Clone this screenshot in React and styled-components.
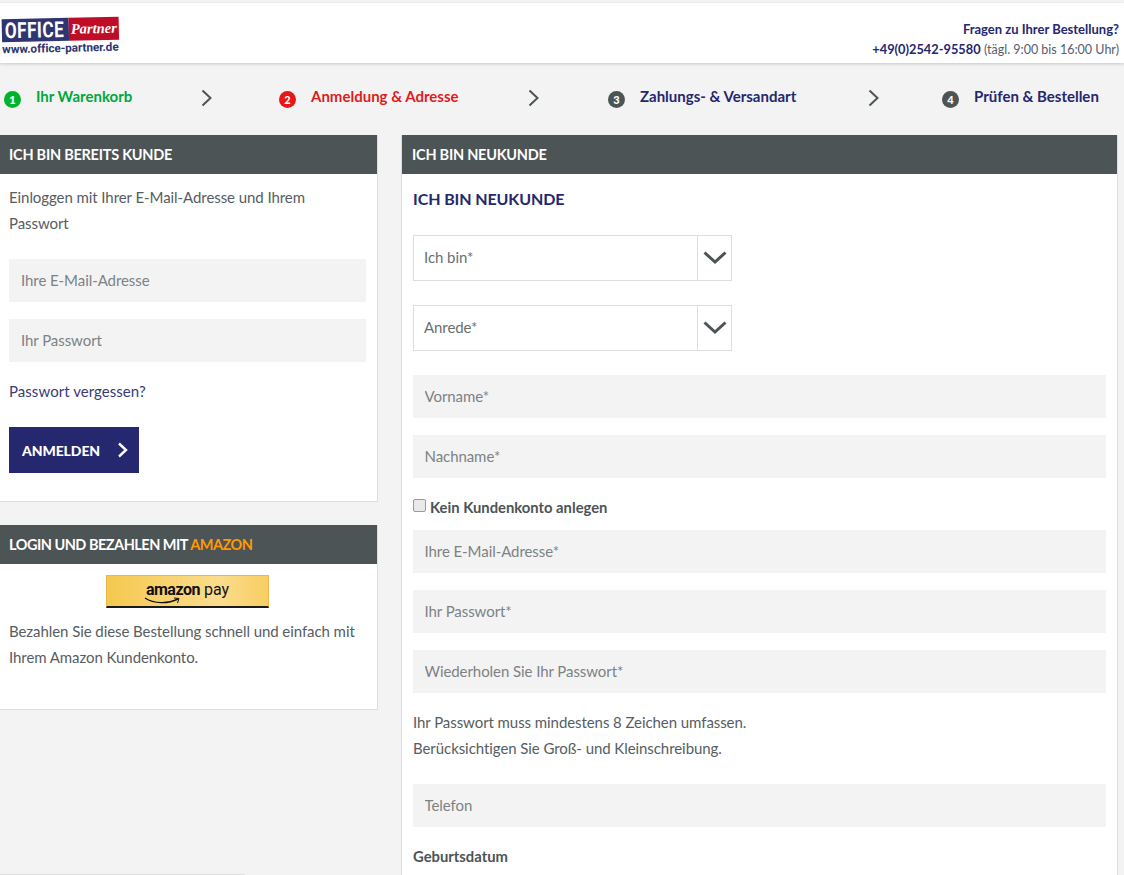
import React from 'react';
import styled, { createGlobalStyle } from 'styled-components';

const Global = createGlobalStyle`
  html, body { margin: 0; padding: 0; background: #f3f3f3; }
  body { height: 875px; overflow: hidden; font-family: "Lato", "Noto Sans", sans-serif; color: #4c5456; font-size: 15px; }
  * { box-sizing: border-box; }
`;
const Navy = '#25276f';
const Page = styled.div`height: 875px; overflow: hidden; padding-top: 3px;`;
const Header = styled.header`
  height: 60px; background: #fff; box-shadow: 0 1px 3px rgba(0,0,0,.18);
  display: flex; justify-content: space-between; align-items: flex-start; padding: 0 5px 0 2px;
`;
const Logo = styled.div`margin-top: 15px; width: 117px; transform: rotate(-1.3deg);`;
const LogoBar = styled.div`display: flex; height: 23px;`;
const LogoOffice = styled.div`
  width: 67px; background: #2f3570; color: #fff; font: 700 22px/24px "Liberation Sans Narrow", "Roboto", sans-serif;
  letter-spacing: .6px; padding-left: 3px; white-space: nowrap; overflow: hidden;
  span { display: inline-block; transform: scaleX(.78); transform-origin: left; }
`;
const LogoPartner = styled.div`
  flex: 1; background: #c00d27; color: #fff; font: italic 700 14.5px/23px "Liberation Serif", serif; text-align: center;
`;
const LogoUrl = styled.div`font: 700 11.7px/13px "Roboto", sans-serif; color: #2f3570; margin-top: 1px; letter-spacing: -.05px; white-space: nowrap;`;
const Contact = styled.div`text-align: right; margin-top: 16px; font-size: 13px; line-height: 20px; color: ${Navy};`;
const ContactStrong = styled.div`font-weight: 700;`;
const Phone = styled.strong`font-size: 12.8px;`;
const Hours = styled.span`color: #565d6e; font-size: 12.5px;`;
const Steps = styled.nav`
  height: 72px; display: grid; grid-template-columns: 197px 78px 249px 80px 260px 74px 1fr; padding: 23px 0 0 4px;
`;
const Step = styled.div`display: flex; align-items: flex-start; font-weight: 700; font-size: 15px; line-height: 20px; color: ${p => p.$color};`;
const Circle = styled.span`
  width: 17px; height: 17px; border-radius: 50%; background: ${p => p.$bg}; color: #fff; font-size: 11px; font-weight: 900;
  line-height: 17px; text-align: center; margin: 5px 15px 0 0; flex: none;
`;
const Chevron = styled.svg`width: 12px; height: 18px; margin-top: 3px; display: block;`;
const Columns = styled.main`display: grid; grid-template-columns: 378px 717px; column-gap: 23px;`;
const LeftCol = styled.div`display: flex; flex-direction: column;`;
const Panel = styled.section`
  background: #fff; border: 1px solid #ddd; border-top: 0; ${p => p.$noLeft ? 'border-left: 0;' : ''}
  & + & { margin-top: 23px; }
  height: ${p => p.$h ? p.$h + 'px' : 'auto'};
`;
const PanelHead = styled.h2`
  margin: 0; height: 39px; background: #4c5456; color: #fff; font-size: 14.5px; font-weight: 700; line-height: 39px; padding-left: ${p => p.$full ? 10 : 9}px; text-transform: uppercase;
  letter-spacing: ${p => p.$tight ? -.5 : -.25}px;
`;
const Orange = styled.span`color: #ff9900;`;
const LeftBody = styled.div`padding: 10px 11px 0 9px;`;
const Text = styled.p`margin: 0; font-size: 15px; line-height: 26px; color: #565d63; letter-spacing: -.07px;`;
const Field = styled.input`
  display: block; width: 100%; height: 43px; border: 0; background: #f3f3f3; padding: 0 12px 2px; margin-top: ${p => p.$mt ?? 17}px;
  font: 15px "Lato", sans-serif; color: #4c5456; outline: 0; letter-spacing: -.07px;
  &::placeholder { color: #7d8284; opacity: 1; }
`;
const WideField = styled(Field)`padding: 0 11.5px 2px;`;
const ForgotLink = styled.a`display: block; margin-top: 16px; font-size: 15px; line-height: 26px; color: #3a3a78; letter-spacing: .05px;`;
const Button = styled.button`
  display: flex; align-items: center; width: 130px; height: 46px; margin-top: 23px; border: 0; background: ${Navy}; color: #fff;
  font: 900 14px "Lato", sans-serif; padding: 0 0 0 13px; letter-spacing: -.1px;
  svg { margin-left: 17px; }
`;
const AmazonBody = styled.div`padding: 11px 11px 0 9px;`;
const PayButton = styled.div`
  width: 163px; height: 33px; margin: 0 auto 10px;
  background: linear-gradient(90deg, #f5c94f 0%, #fbdc8c 70%, #f8cd62 100%);
  border: 1px solid #e6bb4a; border-bottom: 2px solid #1a1a1a; position: relative;
  display: flex; align-items: center; justify-content: center; gap: 4px; padding-bottom: 2px;
  color: #111; font: 700 16px/1 "Roboto", sans-serif; letter-spacing: -.5px;
`;
const PayWord = styled.span`font-weight: 400; letter-spacing: 0;`;
const Smile = styled.svg`position: absolute; left: 37px; top: 21px; width: 40px; height: 8px;`;
const Rule = styled.div`width: 245px; margin-top: 164px; border-top: 1px solid #ddd;`;
const RightBody = styled.div`padding: 14px 11px 60px 11px;`;
const FormTitle = styled.h3`margin: 0 0 25px; font-size: 16px; line-height: 22px; font-weight: 700; color: ${Navy}; text-transform: uppercase; letter-spacing: -.1px;`;
const SelectBox = styled.div`
  display: flex; width: 319px; height: 46px; border: 1px solid #ddd; margin-bottom: 24px; align-items: stretch; background: #fff;
`;
const SelectText = styled.div`flex: 1; padding-left: 10px; line-height: 42px; font-size: 15px; color: #6a6f72; letter-spacing: -.07px;`;
const SelectArrow = styled.div`width: 34px; border-left: 1px solid #ddd; display: flex; align-items: center; justify-content: center;`;
const CheckRow = styled.label`display: flex; align-items: flex-start; margin-top: 17px; height: 26px; font-weight: 700; font-size: 14.8px; line-height: 24px; color: #4c5456;`;
const Check = styled.input`
  appearance: none; width: 13px; height: 13px; margin: 4px 4px 0 0; flex: none; background: #e9e9e9; border: 1px solid #9a9a9a; border-radius: 2px;
`;
const Note = styled.p`margin: 16px 0 0; font-size: 15px; line-height: 26px; color: #565d63; letter-spacing: -.07px;`;
const Label = styled.div`margin-top: 16px; font-weight: 700; font-size: 14.8px; line-height: 26px; color: #4c5456;`;

const Chev = ({ color = '#4c5456', w = 2 }) => (
  <Chevron viewBox="0 0 12 18" fill="none"><path d="M1.5 1.5 L9.5 9 L1.5 16.5" stroke={color} strokeWidth={w} /></Chevron>
);
const Down = () => (
  <svg width="24" height="14" viewBox="0 0 24 14" fill="none"><path d="M1.5 1.5 L12 11 L22.5 1.5" stroke="#4c5456" strokeWidth="3" /></svg>
);

export default function App() {
  return (
    <Page>
      <Global />
      <Header>
        <Logo>
          <LogoBar>
            <LogoOffice><span>OFFICE</span></LogoOffice>
            <LogoPartner>Partner</LogoPartner>
          </LogoBar>
          <LogoUrl>www.office-partner.de</LogoUrl>
        </Logo>
        <Contact>
          <ContactStrong>Fragen zu Ihrer Bestellung?</ContactStrong>
          <div><Phone>+49(0)2542-95580</Phone> <Hours>(tägl. 9:00 bis 16:00 Uhr)</Hours></div>
        </Contact>
      </Header>
      <Steps>
        <Step $color="#00a83c"><Circle $bg="#00b32d">1</Circle>Ihr Warenkorb</Step>
        <Chev />
        <Step $color="#e01b1b"><Circle $bg="#e81717">2</Circle>Anmeldung &amp; Adresse</Step>
        <Chev />
        <Step $color={Navy}><Circle $bg="#4c5456">3</Circle>Zahlungs- &amp; Versandart</Step>
        <Chev />
        <Step $color={Navy}><Circle $bg="#4c5456">4</Circle>Prüfen &amp; Bestellen</Step>
      </Steps>
      <Columns>
        <LeftCol>
          <Panel $noLeft $h={367}>
            <PanelHead>Ich bin bereits Kunde</PanelHead>
            <LeftBody>
              <Text>Einloggen mit Ihrer E-Mail-Adresse und Ihrem Passwort</Text>
              <Field $mt={23} placeholder="Ihre E-Mail-Adresse" />
              <Field placeholder="Ihr Passwort" />
              <ForgotLink>Passwort vergessen?</ForgotLink>
              <Button>ANMELDEN<svg width="12" height="18" viewBox="0 0 12 18" fill="none"><path d="M2 2.5 L9 9 L2 15.5" stroke="#fff" strokeWidth="2.4" /></svg></Button>
            </LeftBody>
          </Panel>
          <Panel $noLeft $h={185}>
            <PanelHead $tight>Login und bezahlen mit <Orange>Amazon</Orange></PanelHead>
            <AmazonBody>
              <PayButton>
                amazon <PayWord>pay</PayWord>
                <Smile viewBox="0 0 40 8" fill="none"><path d="M1 1 C10 7 24 7 34 2" stroke="#111" strokeWidth="1.4" /><path d="M30 1 L35 1.5 L33.5 6" stroke="#111" strokeWidth="1" /></Smile>
              </PayButton>
              <Text>Bezahlen Sie diese Bestellung schnell und einfach mit Ihrem Amazon Kundenkonto.</Text>
            </AmazonBody>
          </Panel>
          <Rule />
        </LeftCol>
        <Panel>
          <PanelHead $full>Ich bin Neukunde</PanelHead>
          <RightBody>
            <FormTitle>Ich bin Neukunde</FormTitle>
            <SelectBox><SelectText>Ich bin*</SelectText><SelectArrow><Down /></SelectArrow></SelectBox>
            <SelectBox><SelectText>Anrede*</SelectText><SelectArrow><Down /></SelectArrow></SelectBox>
            <WideField placeholder="Vorname*" />
            <WideField placeholder="Nachname*" />
            <CheckRow><Check type="checkbox" />Kein Kundenkonto anlegen</CheckRow>
            <WideField $mt={9} placeholder="Ihre E-Mail-Adresse*" />
            <WideField placeholder="Ihr Passwort*" />
            <WideField placeholder="Wiederholen Sie Ihr Passwort*" />
            <Note>Ihr Passwort muss mindestens 8 Zeichen umfassen.<br />Berücksichtigen Sie Groß- und Kleinschreibung.</Note>
            <WideField $mt={23} placeholder="Telefon" />
            <Label>Geburtsdatum</Label>
          </RightBody>
        </Panel>
      </Columns>
    </Page>
  );
}
